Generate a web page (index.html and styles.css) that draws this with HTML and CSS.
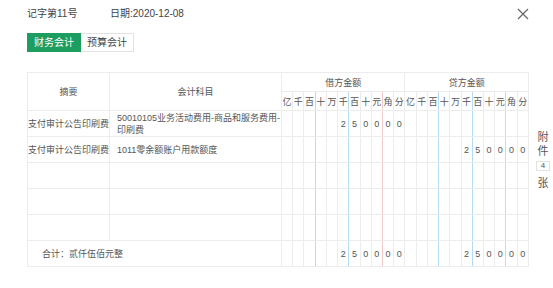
FILE: index.html
```html
<!DOCTYPE html>
<html lang="zh-CN">
<head>
    <meta charset="UTF-8">
    <meta name="viewport" content="width=device-width, initial-scale=1.0">
    <title>凭证详情</title>
    <link rel="stylesheet" href="styles.css">
</head>
<body>
    <div class="voucher">
        <div class="top">
            <span class="word-no">记字第11号</span>
            <span class="date">日期:2020-12-08</span>
            <span class="close">
                <svg width="12" height="12" viewBox="0 0 12 12">
                    <path d="M1 1 L11 11 M11 1 L1 11" stroke="#666" stroke-width="1.2" fill="none"/>
                </svg>
            </span>
        </div>

        <div class="tabs">
            <span class="tab active">财务会计</span>
            <span class="tab">预算会计</span>
        </div>

        <div class="sheet">
            <table class="entries">
                <thead>
                    <tr class="head-row">
                        <th rowspan="2" class="col-summary">摘要</th>
                        <th rowspan="2" class="col-account">会计科目</th>
                        <th colspan="11">借方金额</th>
                        <th colspan="11">贷方金额</th>
                    </tr>
                    <tr class="head-row" id="unitRow"></tr>
                </thead>
                <tbody id="entryBody"></tbody>
            </table>

            <div class="attach">
                <span>附</span>
                <span>件</span>
                <span class="count">4</span>
                <span>张</span>
            </div>
        </div>
    </div>

    <script>
        const units = ['亿', '千', '百', '十', '万', '千', '百', '十', '元', '角', '分'];

        const entries = [
            { summary: '支付审计公告印刷费', account: '50010105业务活动费用-商品和服务费用-印刷费', debit: 250000, credit: 0 },
            { summary: '支付审计公告印刷费', account: '1011零余额账户用款额度', debit: 0, credit: 250000 },
            { summary: '', account: '', debit: 0, credit: 0 },
            { summary: '', account: '', debit: 0, credit: 0 },
            { summary: '', account: '', debit: 0, credit: 0 }
        ];

        // class for the coloured separators: after 百(2), 千(5) blue, after 元(8) red
        function lineClass(i) {
            if (i === 2 || i === 5) return 'line-blue';
            if (i === 8) return 'line-red';
            return '';
        }

        function digitCells(cents) {
            const text = cents ? String(cents).padStart(11, ' ') : ' '.repeat(11);
            let html = '';
            for (let i = 0; i < 11; i++) {
                html += `<td class="digit ${lineClass(i)}">${text[i] === ' ' ? '' : text[i]}</td>`;
            }
            return html;
        }

        let unitHtml = '';
        for (let side = 0; side < 2; side++) {
            units.forEach((u, i) => {
                unitHtml += `<th class="unit ${lineClass(i)}">${u}</th>`;
            });
        }
        document.getElementById('unitRow').innerHTML = unitHtml;

        const body = document.getElementById('entryBody');
        let debitTotal = 0;
        let creditTotal = 0;

        entries.forEach(entry => {
            debitTotal += entry.debit;
            creditTotal += entry.credit;
            const row = document.createElement('tr');
            row.className = 'entry-row';
            row.innerHTML = `
                <td class="summary">${entry.summary}</td>
                <td class="account">${entry.account}</td>
                ${digitCells(entry.debit)}
                ${digitCells(entry.credit)}
            `;
            body.appendChild(row);
        });

        const totalRow = document.createElement('tr');
        totalRow.className = 'entry-row total-row';
        totalRow.innerHTML = `
            <td colspan="2" class="total-label">合计：贰仟伍佰元整</td>
            ${digitCells(debitTotal)}
            ${digitCells(creditTotal)}
        `;
        body.appendChild(totalRow);
    </script>
</body>
</html>
```

FILE: styles.css
```css
body {
    margin: 0;
    font-family: "Liberation Sans", "Noto Sans CJK SC", sans-serif;
    color: #444;
    background: #fff;
}

.voucher {
    padding: 8px 0 0 27px;
}

.top {
    display: flex;
    align-items: center;
    height: 12px;
    padding-right: 24px;
    font-size: 10px;
    line-height: 12px;
}

.word-no {
    width: 83px;
}

.close {
    margin-left: auto;
    width: 12px;
    height: 12px;
}

.close svg {
    display: block;
}

.tabs {
    display: flex;
    margin-top: 13px;
}

.tab {
    box-sizing: border-box;
    width: 54px;
    height: 19px;
    line-height: 17px;
    font-size: 10px;
    text-align: center;
    border: 1px solid #e2e2e2;
    color: #444;
}

.tab.active {
    background: #1d9d5f;
    border-color: #1d9d5f;
    color: #fff;
}

.tab + .tab {
    border-left: none;
    width: 53px;
}

.sheet {
    display: flex;
    margin-top: 20px;
}

.entries {
    flex-shrink: 0;
    width: 502px;
    table-layout: fixed;
    border-collapse: collapse;
    font-size: 9px;
    color: #555;
}

.entries th,
.entries td {
    border: 1px solid #ececec;
    padding: 0;
    text-align: center;
    font-weight: normal;
    overflow: hidden;
    white-space: nowrap;
}

.col-summary { width: 81px; }
.col-account { width: 171px; }

.head-row {
    height: 19px;
}

.entry-row {
    height: 26px;
}

.unit {
    font-size: 9px;
}

.entries td.account {
    text-align: left;
    padding-left: 7px;
    white-space: normal;
    line-height: 12px;
}

.entries td.total-label {
    text-align: left;
    padding-left: 14px;
}

.entries .line-blue {
    border-right-color: #b5dcf4;
}

.entries .line-red {
    border-right-color: #f4c9c9;
}

.attach {
    display: flex;
    flex-direction: column;
    align-items: center;
    width: 20px;
    margin-left: 4px;
    padding-top: 58px;
    font-size: 11px;
    line-height: 14px;
    color: #555;
}

.count {
    box-sizing: border-box;
    width: 14px;
    height: 10px;
    margin: 3px 0 5px;
    border: 1px solid #e2e2e2;
    font-size: 8px;
    line-height: 8px;
    text-align: center;
}
```
